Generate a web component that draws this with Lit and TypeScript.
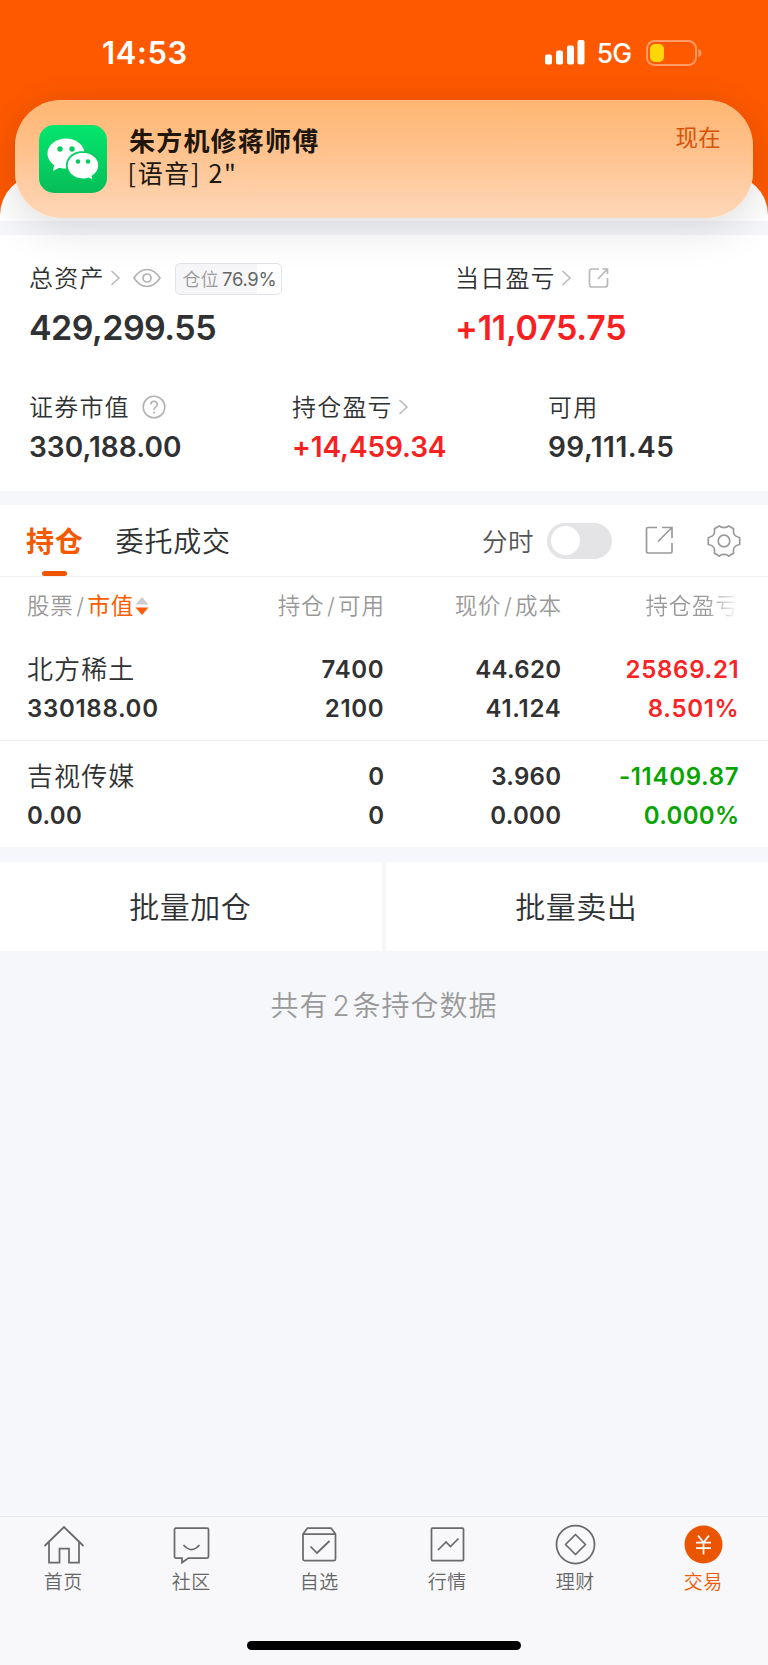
import { LitElement, html, css, svg } from "lit";
import { customElement, property } from "lit/decorators.js";
import { classMap } from "lit/directives/class-map.js";

interface Holding {
  name: string;
  value: string;
  held: string;
  usable: string;
  price: string;
  cost: string;
  profit: string;
  rate: string;
  down: boolean;
}

const HOLDINGS: Holding[] = [
  { name: "北方稀土", value: "330188.00", held: "7400", usable: "2100", price: "44.620", cost: "41.124", profit: "25869.21", rate: "8.501%", down: false },
  { name: "吉视传媒", value: "0.00", held: "0", usable: "0", price: "3.960", cost: "0.000", profit: "-11409.87", rate: "0.000%", down: true },
];

const chevron = html`<svg class="chevron" width="11" height="16" viewBox="0 0 11 16" fill="none" stroke="#bbb" stroke-width="1.6"><path d="M1.5 1 9 8 1.5 15" /></svg>`;

@customElement("status-bar")
class StatusBar extends LitElement {
  static styles = css`
    :host { display: flex; align-items: center; justify-content: space-between; height: 100px; box-sizing: border-box; padding: 5px 66.5px 0 102px; color: #fff; font-family: Inter, "Noto Sans", sans-serif; }
    .time { font-size: 31px; font-weight: 600; letter-spacing: 0.6px; }
    .right { display: flex; align-items: center; }
    .net { font-size: 26.5px; font-weight: 500; letter-spacing: -1px; margin: 0 14.5px 0 12px; }
    svg { display: block; }
  `;
  render() {
    return html`
      <span class="time">14:53</span>
      <div class="right">
        <svg width="40" height="26" viewBox="0 0 40 26" fill="#fff">
          <rect x="0" y="14.5" width="7" height="10" rx="2" /><rect x="11" y="10.5" width="7" height="14" rx="2" />
          <rect x="22" y="5.5" width="7" height="19" rx="2" /><rect x="32.5" y="0" width="7" height="24.5" rx="2" />
        </svg>
        <span class="net">5G</span>
        <svg width="56" height="26" viewBox="0 0 56 26">
          <rect x="1" y="1" width="49" height="24" rx="7.5" fill="none" stroke="#ff9b66" stroke-width="2" />
          <rect x="4" y="4" width="14" height="18" rx="5" fill="#ffd60a" />
          <path d="M52.5 9q3 1 3 4t-3 4z" fill="#ff9b66" />
        </svg>
      </div>`;
  }
}

@customElement("push-banner")
class PushBanner extends LitElement {
  static styles = css`
    :host { display: flex; box-sizing: border-box; height: 118px; padding: 25px 32px 0 24px; border-radius: 46px; color: #20160e;
      background: linear-gradient(180deg, #ffb673 0%, #ffbf86 35%, #fecba0 68%, #fed7b8 100%);
      box-shadow: 0 8px 44px rgba(0, 0, 0, 0.15), inset 0 0 1px rgba(255, 255, 255, 0.5);
      font-family: Inter, "Noto Sans CJK SC", sans-serif; }
    .text { flex: 1; margin-left: 22px; display: flex; flex-direction: column; }
    .title { font-size: 26px; font-weight: 700; line-height: 34px; letter-spacing: 1.2px; }
    .body { font-size: 25px; line-height: 26px; letter-spacing: 1.7px; font-family: "Noto Sans CJK SC", sans-serif; margin-left: -1.5px; }
    .when { font-size: 22.5px; line-height: 26px; color: #d65208; letter-spacing: 0.2px; }
    svg { display: block; }
  `;
  render() {
    return html`
      <svg width="68" height="68" viewBox="0 0 68 68">
        <defs><linearGradient id="g" x1="0" y1="0" x2="0" y2="1"><stop offset="0" stop-color="#03e76d" /><stop offset="1" stop-color="#07bd58" /></linearGradient></defs>
        <rect width="68" height="68" rx="15" fill="url(#g)" />
        <path fill="#fff" d="M27 13.500C16.800 13.500 8.500 20.200 8.500 28.500c0 4.700 2.700 8.700 6.600 11.500L14 46l6.200-3.300c2.200.6 4.400.9 6.800.9 10.200 0 18.500-6.800 18.500-15.100S37.200 13.500 27 13.500Z" />
        <path fill="#fff" stroke="#06cf62" stroke-width="1.800" d="M44 26.800c-9 0-16.200 6.100-16.200 13.700S35 54.300 44 54.300c2 0 3.900-.3 5.700-.9l5 2.500-1.200-4.600c4-2.600 6.600-6.400 6.600-10.800 0-7.600-7.200-13.700-16.100-13.700Z" />
        <g fill="#07cb60"><circle cx="21" cy="24" r="2.700" /><circle cx="33" cy="24" r="2.700" /><circle cx="39" cy="36.500" r="2.300" /><circle cx="49" cy="36.500" r="2.300" /></g>
      </svg>
      <div class="text"><span class="title">朱方机修蒋师傅</span><span class="body">[语音] 2"</span></div>
      <span class="when">现在</span>`;
  }
}

@customElement("asset-summary")
class AssetSummary extends LitElement {
  static styles = css`
    :host { display: block; box-sizing: border-box; height: 256px; background: #fff; color: #303132; padding: 27px 30px 0 29px; font-family: Inter, "Noto Sans CJK SC", sans-serif; }
    .row { display: grid; }
    .top { grid-template-columns: 426px 1fr; }
    .sub { grid-template-columns: 263px 256px 1fr; margin-top: 43px; }
    .label { display: flex; align-items: center; height: 32px; font-size: 24px; letter-spacing: 1.2px; white-space: nowrap; font-weight: 350; }
    .label > span:first-child { margin-bottom: 3px; }
    .num { font-size: 34px; font-weight: 600; line-height: 40px; margin-top: 14px; letter-spacing: -0.55px; }
    .num.up { letter-spacing: -0.25px; }
    .sub .num { font-size: 28px; line-height: 34px; margin-top: 7px; letter-spacing: 0.05px; }
    .sub .num.up { letter-spacing: -0.1px; }
    .sub .num.free { letter-spacing: 0.45px; }
    .up { color: #f82020; }
    .chevron { margin-left: 5px; }
    .eye { margin-left: 12.5px; }
    .open { margin-left: 16px; }
    .help { margin-left: 12px; }
    .pos { box-sizing: border-box; width: 107px; height: 32px; margin: 2px 0 0 14px; border: 1px solid #e2e3e8; border-radius: 5px; font-size: 18px; line-height: 30px; padding-left: 6.5px; letter-spacing: 0; color: #999; background: linear-gradient(90deg, #f6f6f9 76.9%, #fff 76.9%); }
    .pos b { font-weight: 400; color: #666; margin-left: 3.5px; font-size: 18.500px; letter-spacing: -0.35px; }
    svg { display: block; }
  `;
  render() {
    return html`
      <div class="row top">
        <div>
          <div class="label"><span>总资产</span>${chevron}
            <svg class="eye" width="28" height="20" viewBox="0 0 28 20" fill="none" stroke="#b2b2b2" stroke-width="1.700"><path d="M1 10Q6.500 1.500 14 1.500T27 10Q21.500 18.500 14 18.500T1 10Z" /><circle cx="14" cy="10" r="4" /></svg>
            <span class="pos">仓位<b>76.9%</b></span>
          </div>
          <div class="num">429,299.55</div>
        </div>
        <div>
          <div class="label"><span>当日盈亏</span>${chevron}
            <svg class="open" width="22" height="22" viewBox="0 0 22 22" fill="none" stroke="#b8b8b8" stroke-width="1.700"><path d="M11 2H4Q1.500 2 1.500 4.500v13Q1.500 20 4 20h13q2.500 0 2.500-2.500V11M14.500 2h5v5M19.500 2 10 12" /></svg>
          </div>
          <div class="num up">+11,075.75</div>
        </div>
      </div>
      <div class="row sub">
        <div>
          <div class="label"><span>证券市值</span>
            <svg class="help" width="24" height="24" viewBox="0 0 24 24" fill="none" stroke="#b2b2b2" stroke-width="1.600"><circle cx="12" cy="12" r="10.800" /><path d="M8.800 9.600Q8.800 6.300 12 6.300T15.200 9.400Q15.200 11 13.400 12.100 12 13 12 15M12 16.500v2" /></svg>
          </div>
          <div class="num">330,188.00</div>
        </div>
        <div><div class="label"><span>持仓盈亏</span>${chevron}</div><div class="num up">+14,459.34</div></div>
        <div><div class="label"><span>可用</span></div><div class="num free">99,111.45</div></div>
      </div>`;
  }
}

@customElement("holding-list")
class HoldingList extends LitElement {
  @property({ attribute: false }) items: Holding[] = [];
  static styles = css`
    :host { display: block; background: #fff; color: #303132; font-family: Inter, "Noto Sans CJK SC", sans-serif; }
    .bar { display: flex; align-items: center; height: 72px; box-sizing: border-box; padding: 0 28px 0 26px; border-bottom: 1px solid #f1f2f4; font-size: 28px; letter-spacing: 0.8px; }
    .tab { height: 71px; line-height: 75px; font-weight: 350; }
    .tab.on { display: flex; flex-direction: column; align-items: center; color: #f35a00; font-weight: 700; margin-right: 32px; }
    .tab.on span { height: 66px; }
    .tab.on i { width: 25px; height: 5px; border-radius: 2.500px; background: #ee5500; margin-right: 1px; }
    .mode { margin: 0 0 3px auto; font-size: 25.500px; letter-spacing: 0.500px; color: #555; font-weight: 350; }
    .switch { box-sizing: border-box; width: 65px; height: 36px; border-radius: 18px; background: #e4e4e6; padding: 3.500px; margin: 0 33px 0 13px; }
    .switch i { display: block; width: 29px; height: 29px; border-radius: 50%; background: #fff; }
    .gear { margin: 0 -0.5px 0 32.5px; }
    svg { display: block; }
    .grid { display: grid; grid-template-columns: 181.400px 176px 177px 178px; padding: 0 27px; text-align: right; }
    .grid > :first-child { text-align: left; }
    .head { height: 60px; line-height: 57px; font-size: 22.500px; color: #999; letter-spacing: 0.85px; font-weight: 350; grid-template-columns: 180.800px 177px 177px 177px; }
    .sort { display: flex; align-items: center; white-space: nowrap; height: 57px; }
    .sort b { color: #fa5c00; font-weight: 400; }
    .sort svg { margin: 0 0 0 1px; }
    .slash { margin: 0 2.4px 0 2.6px; }
    .fade { background: linear-gradient(90deg, #999 calc(100% - 32px), #fff); -webkit-background-clip: text; background-clip: text; color: transparent; }
    .item { height: 103px; box-sizing: border-box; padding-top: 14px; font-size: 24px; font-weight: 600; line-height: 38.500px; }
    .item + .item { border-top: 1px solid #f1f2f4; height: 107px; padding-top: 17px; }
    .item div { height: 38.500px; letter-spacing: 0.3px; }
    .item div.wide { letter-spacing: 0.7px; }
    .item div.name { font-size: 26px; font-weight: 350; letter-spacing: 1.1px; }
    .up { color: #fb2424; }
    .down { color: #08a400; }
  `;
  private cell(text: string) {
    return html`<div class=${classMap({ wide: /[17]/.test(text) })}>${text}</div>`;
  }
  render() {
    return html`
      <div class="bar">
        <div class="tab on"><span>持仓</span><i></i></div>
        <div class="tab">委托成交</div>
        <span class="mode">分时</span>
        <div class="switch"><i></i></div>
        <svg width="29" height="29" viewBox="0 0 29 29" fill="none" stroke="#999" stroke-width="1.700"><path d="M12 1.500H3Q1.500 1.500 1.500 3v22.500Q1.500 27 3 27h22.500Q27 27 27 25.500V17M17 1.500h10V12M27 1.500 13 15.500" /></svg>
        <svg class="gear" width="34" height="34" viewBox="0 0 34 34" fill="none" stroke="#999" stroke-width="1.700" stroke-linejoin="round">
          <path d="M12.200 1.900Q14 3.600 17 3.600T21.800 1.900L26.600 4.700Q26 9.600 27.800 11.200 29.300 12.900 32.700 13.500V20.500Q29.300 21.100 27.800 22.800 26 24.400 26.600 29.300L21.800 32.100Q20 30.400 17 30.400T12.200 32.100L7.400 29.300Q8 24.400 6.200 22.800 4.700 21.100 1.300 20.500V13.500Q4.700 12.900 6.200 11.200 8 9.600 7.400 4.700Z" /><circle cx="17" cy="17" r="5.800" />
        </svg>
      </div>
      <div class="grid head">
        <span class="sort">股票<span class="slash">/</span><b>市值</b><svg width="14" height="20" viewBox="0 0 14 20"><path d="M7 1 13.500 8.500H.5Z" fill="#ccc" /><path d="M7 19 13.500 11.500H.5Z" fill="#ff5c0a" /></svg></span>
        <span>持仓<span class="slash">/</span>可用</span>
        <span>现价<span class="slash">/</span>成本</span>
        <span class="fade">持仓盈亏</span>
      </div>
      ${this.items.map((h) => html`
        <div class="grid item">
          <div><div class="name">${h.name}</div>${this.cell(h.value)}</div>
          <div>${this.cell(h.held)}${this.cell(h.usable)}</div>
          <div>${this.cell(h.price)}${this.cell(h.cost)}</div>
          <div class=${classMap({ up: !h.down, down: h.down })}>${this.cell(h.profit)}${this.cell(h.rate)}</div>
        </div>`)}`;
  }
}

const TABS = [
  { label: "首页", icon: svg`<path d="M1.500 21 21 2 40.500 21M6 17v20.500h10.500V23.500h9.500v14H36V17" />` },
  { label: "社区", icon: svg`<path d="M5 3h31q1.500 0 1.500 1.500v27q0 1.500-1.500 1.500H17.500l-6.500 4.500V33h-6Q3.500 33 3.500 31.500v-27Q3.500 3 5 3ZM12.500 20q8 9 16 0" />` },
  { label: "自选", icon: svg`<path d="M4 9 8.500 3h23.500L36.500 9v25q0 1.500-1.500 1.500H5.500Q4 35.500 4 34ZM4 9h32.500M11.500 21.500l6.500 6.500L30.500 16" />` },
  { label: "行情", icon: svg`<path d="M5.500 3h30q1 0 1 1v30.500q0 1-1 1H5.500q-1 0-1-1V4q0-1 1-1ZM11 25l8-8 4.500 4.500 8-8" />` },
  { label: "理财", icon: svg`<circle cx="20.500" cy="19.500" r="19" /><path d="M20.500 9.500l10 10-10 10-10-10Z" stroke-linejoin="round" />` },
  { label: "交易", icon: svg`<circle cx="20.500" cy="19.500" r="19" fill="#eb5500" stroke="none" /><path stroke="#fff" d="M15 10.500l5.500 7 5.500-7M13 17.500h15M13 23h15M20.500 17.500v12" />`, on: true },
];

@customElement("tab-bar")
class TabBar extends LitElement {
  static styles = css`
    :host { display: flex; flex-direction: column; align-items: center; justify-content: space-between; height: 149px; box-sizing: border-box; padding-bottom: 15px; background: #f8f8fb; border-top: 1px solid #e9eaec; font-family: "Noto Sans CJK SC", sans-serif; }
    .tabs { width: 100%; display: grid; grid-template-columns: repeat(6, 1fr); color: #666; }
    .tab { display: flex; flex-direction: column; align-items: center; padding-top: 8px; font-size: 19px; line-height: 30px; letter-spacing: 0.500px; font-weight: 350; }
    .tab span { margin: 1px 1.500px 0 0; }
    .on { color: #f05a00; }
    .home { width: 274px; height: 9px; border-radius: 5px; background: #000; }
    svg { display: block; overflow: visible; margin-right: 0.6px; }
  `;
  render() {
    return html`
      <div class="tabs">${TABS.map((t) => html`
        <div class=${classMap({ tab: true, on: !!t.on })}>
          <svg width="41" height="40" viewBox="0 0 41 40" fill="none" stroke="#6a6a6a" stroke-width="1.750">${t.icon}</svg><span>${t.label}</span>
        </div>`)}
      </div>
      <div class="home"></div>`;
  }
}

@customElement("app-root")
class AppRoot extends LitElement {
  static styles = css`
    :host { display: flex; flex-direction: column; position: relative; height: 1665px; background: #f6f7fa; font-family: Inter, "Noto Sans CJK SC", sans-serif; }
    .hero { height: 221px; background: #ff5900; }
    .sheet { height: 46px; margin-top: 75px; border-radius: 40px 40px 0 0; background: #fff; }
    .banner { position: absolute; left: 15px; right: 15px; top: 100px; }
    .summary { margin-top: 14px; }
    .list { margin-top: 14px; }
    .batch { display: grid; grid-template-columns: 382px 382px; gap: 4px; margin-top: 15px; }
    .batch span { box-sizing: border-box; height: 89px; padding-right: 1.500px; line-height: 91px; background: #fff; text-align: center; font-size: 30px; letter-spacing: 0.500px; color: #303132; font-weight: 350; }
    .total { margin-top: 34px; text-align: center; font-size: 28px; line-height: 42px; letter-spacing: 1px; color: #999; font-weight: 350; }
    .total i { font-style: normal; margin: 0 2px 0 4px; }
    .nav { margin-top: auto; }
  `;
  render() {
    return html`
      <div class="hero"><status-bar></status-bar><div class="sheet"></div></div>
      <asset-summary class="summary"></asset-summary>
      <holding-list class="list" .items=${HOLDINGS}></holding-list>
      <div class="batch"><span>批量加仓</span><span>批量卖出</span></div>
      <div class="total">共有<i>2</i>条持仓数据</div>
      <tab-bar class="nav"></tab-bar>
      <push-banner class="banner"></push-banner>`;
  }
}
